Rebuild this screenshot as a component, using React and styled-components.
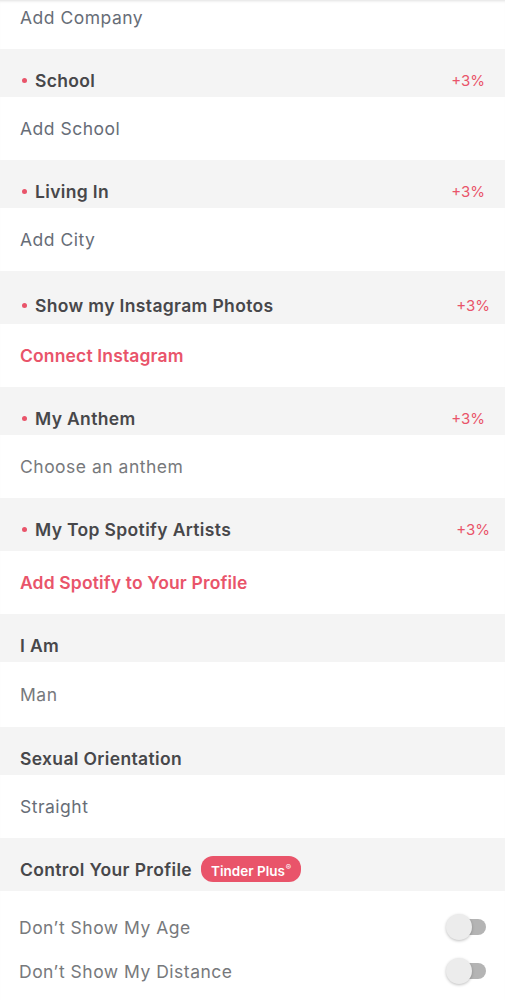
import React from 'react';
import styled, { createGlobalStyle } from 'styled-components';

const GlobalStyle = createGlobalStyle`
  html, body {
    margin: 0;
    padding: 0;
    background: #ffffff;
  }
  body {
    font-family: Inter, 'Open Sans', 'Liberation Sans', sans-serif;
    -webkit-font-smoothing: antialiased;
  }
`;

const RED = '#e9546a';

// ── Layout ─────────────────────────────────────────────
const Page = styled.div`
  width: 505px;
  height: 1000px;
  overflow: hidden;
  display: flex;
  flex-direction: column;
  background: #fff;
  box-shadow: inset 0 3px 3px -2px rgba(0, 0, 0, 0.12);
`;

const SectionHeader = styled.div`
  height: ${p => (p.$tall ? 53 : 48)}px;
  flex-shrink: 0;
  box-sizing: border-box;
  background: #f4f4f4;
  display: flex;
  align-items: flex-end;
  padding: 0 ${p => (p.$tall ? 15 : 20)}px ${p => p.$pb ?? (p.$tall ? 7 : 5)}px 20px;
`;

const HeaderRow = styled.div`
  flex: 1;
  height: 24px;
  display: flex;
  align-items: center;
`;

const Dot = styled.span`
  width: 5px;
  height: 5px;
  border-radius: 50%;
  background: ${RED};
  margin: 0 8px 0 2px;
  flex-shrink: 0;
`;

const HeaderTitle = styled.span`
  font-size: 17.5px;
  font-weight: 600;
  color: #47474a;
  letter-spacing: 0.35px;
`;

const Boost = styled.span`
  margin-left: auto;
  font-size: 15px;
  color: ${RED};
`;

const Pill = styled.span`
  margin-left: 9px;
  background: ${RED};
  color: #fff;
  font-size: 13.5px;
  font-weight: 600;
  border-radius: 12px;
  padding: 2px 10px 3px;
  line-height: 18px;

  sup {
    font-size: 8px;
    font-weight: 400;
    margin-left: 1px;
  }
`;

const ValueRow = styled.div`
  height: ${p => p.$h || 63}px;
  flex-shrink: 0;
  box-sizing: border-box;
  display: flex;
  align-items: center;
  padding: 0 20px ${p => p.$pb || 0}px;
  font-size: 17.5px;
  letter-spacing: ${p => (p.$link ? 0.15 : 0.5)}px;
  color: ${p => (p.$link ? RED : p.$tone || '#676d77')};
  font-weight: ${p => (p.$link ? 600 : 400)};
`;

const ToggleList = styled.div`
  padding-top: 14px;
  display: flex;
  flex-direction: column;
`;

const ToggleRow = styled.div`
  height: 44px;
  display: flex;
  align-items: center;
  justify-content: space-between;
  padding: 0 19px;
  font-size: 17.5px;
  letter-spacing: 0.5px;
  color: #77797c;
`;

const Switch = styled.div`
  position: relative;
  width: 40px;
  height: 26px;
  display: flex;
  align-items: center;
  justify-content: flex-end;
`;

const Track = styled.div`
  width: 32px;
  height: 16px;
  border-radius: 8px;
  background: #b4b4b4;
`;

const Knob = styled.div`
  position: absolute;
  left: 0;
  top: 0;
  width: 26px;
  height: 26px;
  border-radius: 50%;
  background: #ececec;
  box-shadow: 0 1px 3px rgba(0, 0, 0, 0.25);
`;

// ── Data ──────────────────────────────────────────────
const boosted = [
  { title: 'School', value: 'Add School' },
  { title: 'Living In', value: 'Add City' },
  { title: 'Show my Instagram Photos', value: 'Connect Instagram', link: true, tall: true },
  { title: 'My Anthem', value: 'Choose an anthem', tone: '#77797c' },
  { title: 'My Top Spotify Artists', value: 'Add Spotify to Your Profile', link: true, tall: true, pb: 10 },
];

const plain = [
  { title: 'I Am', value: 'Man', tone: '#77797c', h: 65 },
  { title: 'Sexual Orientation', value: 'Straight' },
];

const Toggle = () => (
  <Switch>
    <Track />
    <Knob />
  </Switch>
);

export default function App() {
  return (
    <>
      <GlobalStyle />
      <Page>
        <ValueRow $h={49} $pb={14}>Add Company</ValueRow>

        {boosted.map(s => (
          <React.Fragment key={s.title}>
            <SectionHeader $tall={s.tall} $pb={s.pb}>
              <HeaderRow>
                <Dot />
                <HeaderTitle>{s.title}</HeaderTitle>
                <Boost>+3%</Boost>
              </HeaderRow>
            </SectionHeader>
            <ValueRow $link={s.link} $tone={s.tone}>{s.value}</ValueRow>
          </React.Fragment>
        ))}

        {plain.map(s => (
          <React.Fragment key={s.title}>
            <SectionHeader>
              <HeaderRow>
                <HeaderTitle>{s.title}</HeaderTitle>
              </HeaderRow>
            </SectionHeader>
            <ValueRow $tone={s.tone} $h={s.h}>{s.value}</ValueRow>
          </React.Fragment>
        ))}

        <SectionHeader $tall $pb={10}>
          <HeaderRow>
            <HeaderTitle>Control Your Profile</HeaderTitle>
            <Pill>Tinder Plus<sup>®</sup></Pill>
          </HeaderRow>
        </SectionHeader>

        <ToggleList>
          <ToggleRow>
            Don’t Show My Age
            <Toggle />
          </ToggleRow>
          <ToggleRow>
            Don’t Show My Distance
            <Toggle />
          </ToggleRow>
        </ToggleList>
      </Page>
    </>
  );
}
